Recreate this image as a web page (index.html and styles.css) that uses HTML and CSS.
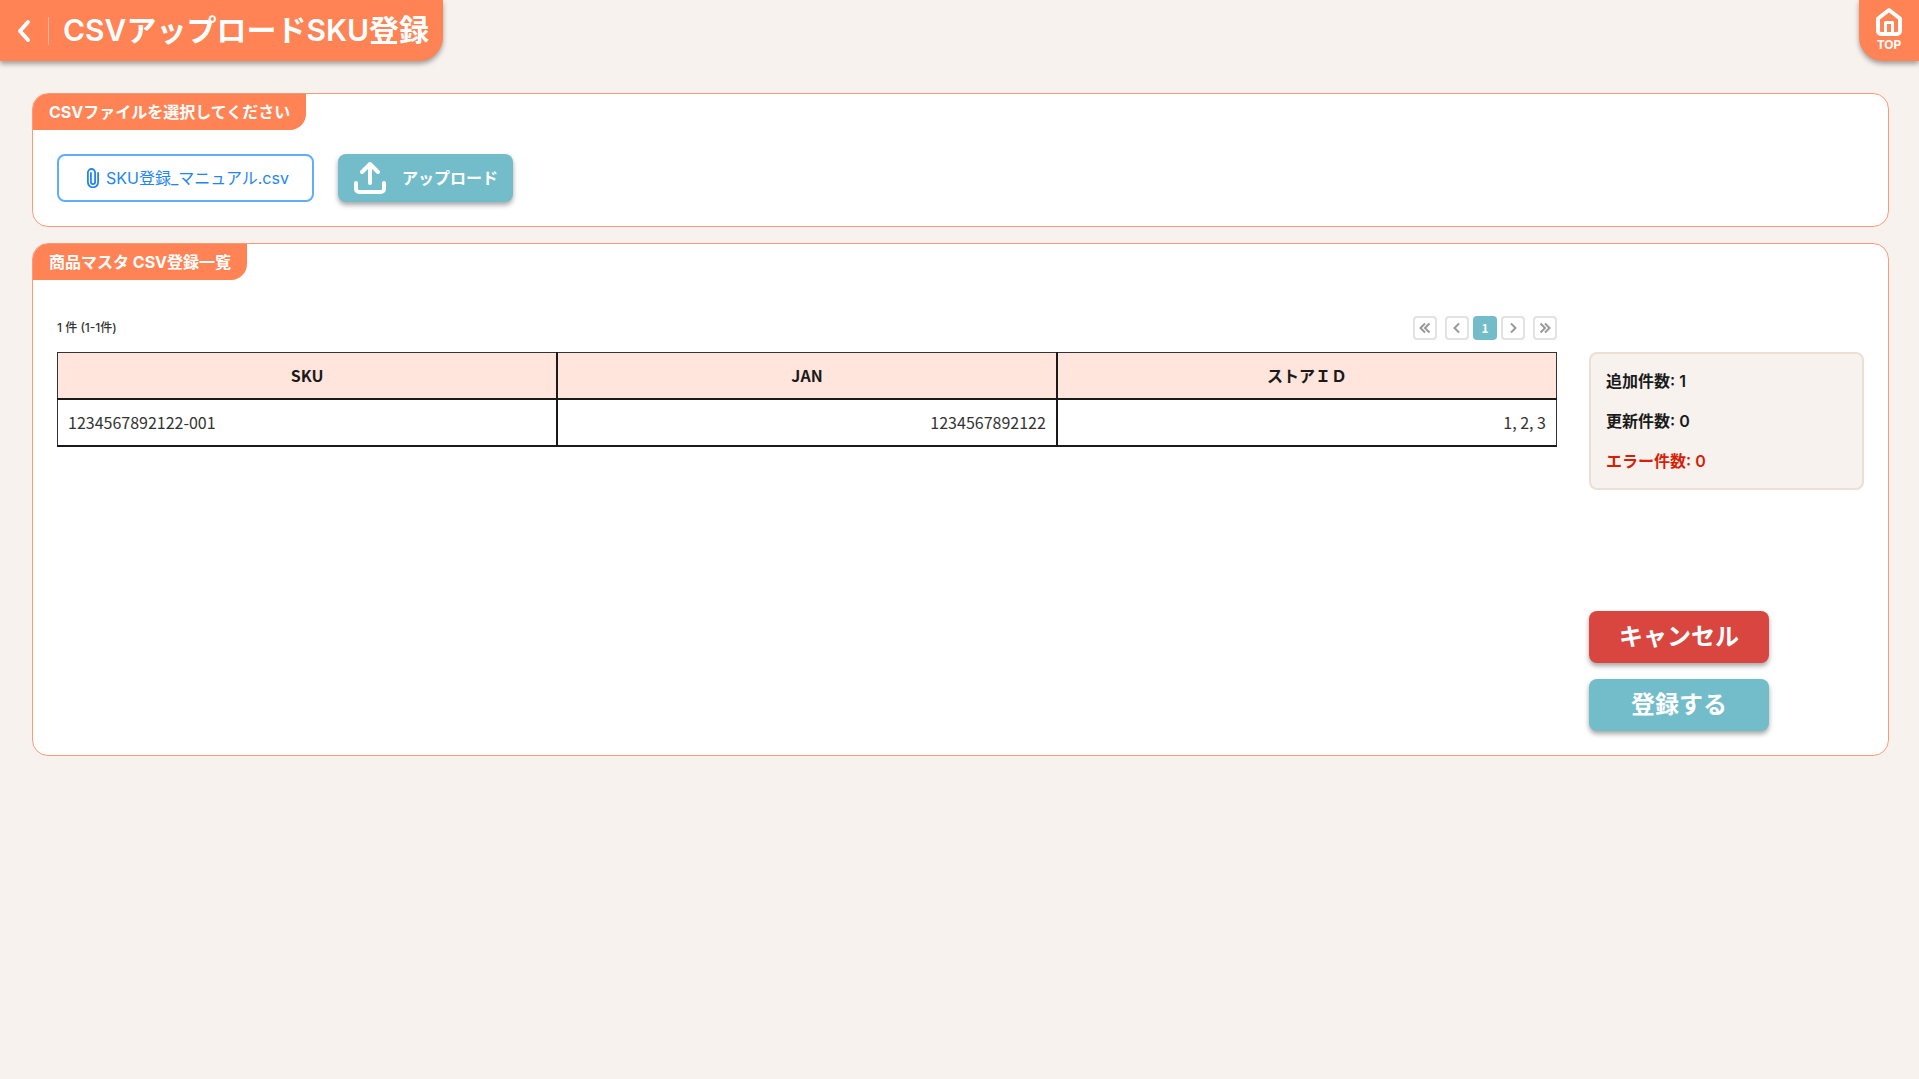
FILE: index.html
```html
<!DOCTYPE html>
<html lang="ja">
<head>
<meta charset="utf-8">
<meta name="viewport" content="width=device-width, initial-scale=1">
<title>CSVアップロードSKU登録</title>
<link rel="stylesheet" href="styles.css">
</head>
<body>
<header class="header">
  <div class="title-bar">
    <button class="back" type="button" aria-label="戻る">
      <svg width="16" height="24" viewBox="0 0 16 24" fill="none" stroke="currentColor" stroke-width="4" stroke-linecap="round" stroke-linejoin="round"><path d="M12 3 4 12l8 9"/></svg>
    </button>
    <h1 class="title">CSVアップロードSKU登録</h1>
  </div>
  <a class="top-link" href="#">
    <svg width="28" height="30" viewBox="0 0 28 30" fill="none" stroke="currentColor" stroke-width="4" stroke-linejoin="round"><path d="M3 11.500 14 3l11 8.500V24a3 3 0 0 1-3 3H6a3 3 0 0 1-3-3z"/><path d="M10.500 27V15.500h7V27" stroke-width="3"/></svg>
    <span>TOP</span>
  </a>
</header>

<main class="content">
  <section class="card">
    <h2 class="card-label">CSVファイルを選択してください</h2>
    <div class="file-row">
      <button class="file" type="button">
        <svg width="12" height="20" viewBox="0 0 12 20" fill="none" stroke="currentColor" stroke-width="1.800" stroke-linecap="round"><path d="M11.100 5v9.200a5.100 5.100 0 0 1-10.200 0V4.600a3.600 3.600 0 0 1 7.200 0v9.400a2.100 2.100 0 0 1-4.200 0V5"/></svg>
        <span>SKU登録_マニュアル.csv</span>
      </button>
      <button class="upload" type="button">
        <svg width="34" height="34" viewBox="0 0 34 34" fill="none" stroke="currentColor" stroke-width="4" stroke-linecap="round" stroke-linejoin="round"><path d="M17 22V4M9 11l8-8 8 8"/><path d="M3 22v6a3 3 0 0 0 3 3h22a3 3 0 0 0 3-3v-6"/></svg>
        <span>アップロード</span>
      </button>
    </div>
  </section>

  <section class="card">
    <h2 class="card-label">商品マスタ CSV登録一覧</h2>
    <div class="result">
      <div class="list">
        <div class="list-head">
          <p class="count">1 件 (1-1件)</p>
          <nav class="pager" aria-label="ページ">
            <button class="page page-first" type="button" aria-label="最初"><svg width="12" height="12" viewBox="0 0 12 12"><path d="M6 1.500 1.500 6 6 10.500M10.500 1.500 6 6l4.500 4.500"/></svg></button>
            <button class="page" type="button" aria-label="前へ"><svg width="12" height="12" viewBox="0 0 12 12"><path d="M8 1.500 3.500 6 8 10.500"/></svg></button>
            <button class="page page-current" type="button" aria-current="page">1</button>
            <button class="page" type="button" aria-label="次へ"><svg width="12" height="12" viewBox="0 0 12 12"><path d="M4 1.500 8.500 6 4 10.500"/></svg></button>
            <button class="page page-last" type="button" aria-label="最後"><svg width="12" height="12" viewBox="0 0 12 12"><path d="M1.500 1.500 6 6l-4.500 4.500M6 1.500 10.500 6 6 10.500"/></svg></button>
          </nav>
        </div>
        <table class="table">
          <thead><tr><th scope="col">SKU</th><th scope="col">JAN</th><th scope="col">ストアＩＤ</th></tr></thead>
          <tbody><tr><td>1234567892122-001</td><td class="num">1234567892122</td><td class="num">1, 2, 3</td></tr></tbody>
        </table>
      </div>
      <aside class="side">
        <div class="summary">
          <p>追加件数: 1</p>
          <p>更新件数: 0</p>
          <p class="error">エラー件数: 0</p>
        </div>
        <div class="actions">
          <button class="action cancel" type="button">キャンセル</button>
          <button class="action submit" type="button">登録する</button>
        </div>
      </aside>
    </div>
  </section>
</main>
</body>
</html>
```
FILE: styles.css
```css
:root {
  --orange: #ff8354;
  --teal: #73bcca;
  --paper: #f7f2ee;
  --shadow: 0 3px 5px rgba(0, 0, 0, 0.35);
}

* { box-sizing: border-box; }

body {
  margin: 0;
  min-height: 100vh;
  background: var(--paper);
  color: #1a1a1a;
  font: 16px/24px Inter, "Noto Sans CJK JP", sans-serif;
}

h1, h2, p { margin: 0; }

button {
  border: 0;
  padding: 0;
  font: inherit;
  color: inherit;
  background: none;
  cursor: pointer;
}

svg { display: block; flex: none; }

.header {
  display: flex;
  justify-content: space-between;
}

.title-bar {
  display: flex;
  align-items: center;
  height: 61px;
  padding: 0 14px 0 16px;
  border-radius: 0 0 24px 0;
  background: var(--orange);
  box-shadow: var(--shadow);
  color: #fff;
}

.back {
  padding-right: 16px;
  border-right: 1px solid rgba(205, 205, 205, 0.7);
  height: 28px;
}

.title {
  padding: 0 0 2px 14px;
  font-size: 30px;
  line-height: 40px;
  font-weight: 600;
}

.top-link {
  display: flex;
  flex-direction: column;
  align-items: center;
  width: 60px;
  height: 61px;
  padding-top: 7px;
  border-radius: 0 0 0 24px;
  background: var(--orange);
  box-shadow: var(--shadow);
  color: #fff;
  font-size: 12px;
  line-height: 16px;
  font-weight: 700;
  text-decoration: none;
}

.content {
  display: flex;
  flex-direction: column;
  gap: 16px;
  padding: 32px 30px 32px 32px;
}

.card {
  overflow: hidden;
  border: 1px solid #ff9a75;
  border-radius: 16px;
  background: #fff;
}

.card-label {
  width: fit-content;
  padding: 6px 16px;
  border-radius: 0 0 16px 0;
  background: var(--orange);
  color: #fff;
  font-size: 16px;
  line-height: 24px;
  font-weight: 700;
}

.file-row {
  display: flex;
  gap: 24px;
  padding: 24px;
}

.file, .upload {
  display: flex;
  align-items: center;
  justify-content: center;
  height: 48px;
  border-radius: 8px;
}

.file {
  gap: 7px;
  padding: 0 23px 0 28px;
  border: 2px solid #60adff;
  color: #2285f5;
}

.upload {
  gap: 15px;
  padding: 0 15px;
  background: var(--teal);
  box-shadow: var(--shadow);
  color: #fff;
  font-weight: 700;
}

.result {
  display: flex;
  gap: 32px;
  padding: 35px 24px 24px;
}

.list { flex: 1; }

.list-head {
  display: flex;
  justify-content: space-between;
  align-items: center;
  height: 25px;
  margin-bottom: 12px;
}

.count {
  font-size: 12px;
  color: #333;
  font-weight: 500;
}

.pager {
  display: flex;
  gap: 4px;
}

.page {
  display: flex;
  align-items: center;
  justify-content: center;
  width: 24px;
  height: 24px;
  border: 2px solid #e2e2e2;
  border-radius: 4px;
  fill: none;
  stroke: #999;
  stroke-width: 2;
}

.page-first { margin-right: 4px; }
.page-last { margin-left: 4px; }

.page-current {
  border-color: var(--teal);
  background: var(--teal);
  color: #fff;
  font-family: "Noto Sans CJK JP", sans-serif;
  font-size: 12px;
  font-weight: 700;
  stroke: none;
}

.table {
  width: 100%;
  table-layout: fixed;
  border: 1px solid #333;
  border-collapse: collapse;
  font-family: "Noto Sans CJK JP", sans-serif;
}

.table th, .table td {
  height: 47px;
  padding: 0 10px;
  border: 2px solid #1a1a1a;
}

.table tr > :first-child { border-left: 1px solid #333; }
.table tr > :last-child { border-right: 1px solid #333; }
.table th { height: 46px; border-top: 1px solid #333; background: #ffe5dc; font-weight: 700; }
.table td { text-align: left; color: #333; }
.table .num { text-align: right; }

.side {
  display: flex;
  flex-direction: column;
  justify-content: space-between;
  gap: 121px;
  width: 275px;
  padding-top: 37px;
}

.summary {
  display: grid;
  gap: 16px;
  padding: 15px;
  border: 2px solid #ecdfd4;
  border-radius: 8px;
  background: var(--paper);
  font-weight: 600;
}

.error { color: #d81e06; }

.actions {
  display: grid;
  gap: 16px;
  width: 180px;
}

.action {
  height: 52px;
  border-radius: 8px;
  box-shadow: var(--shadow);
  color: #fff;
  font-size: 24px;
  font-weight: 700;
}

.cancel { background: #d8463f; }
.submit { background: var(--teal); }
```
